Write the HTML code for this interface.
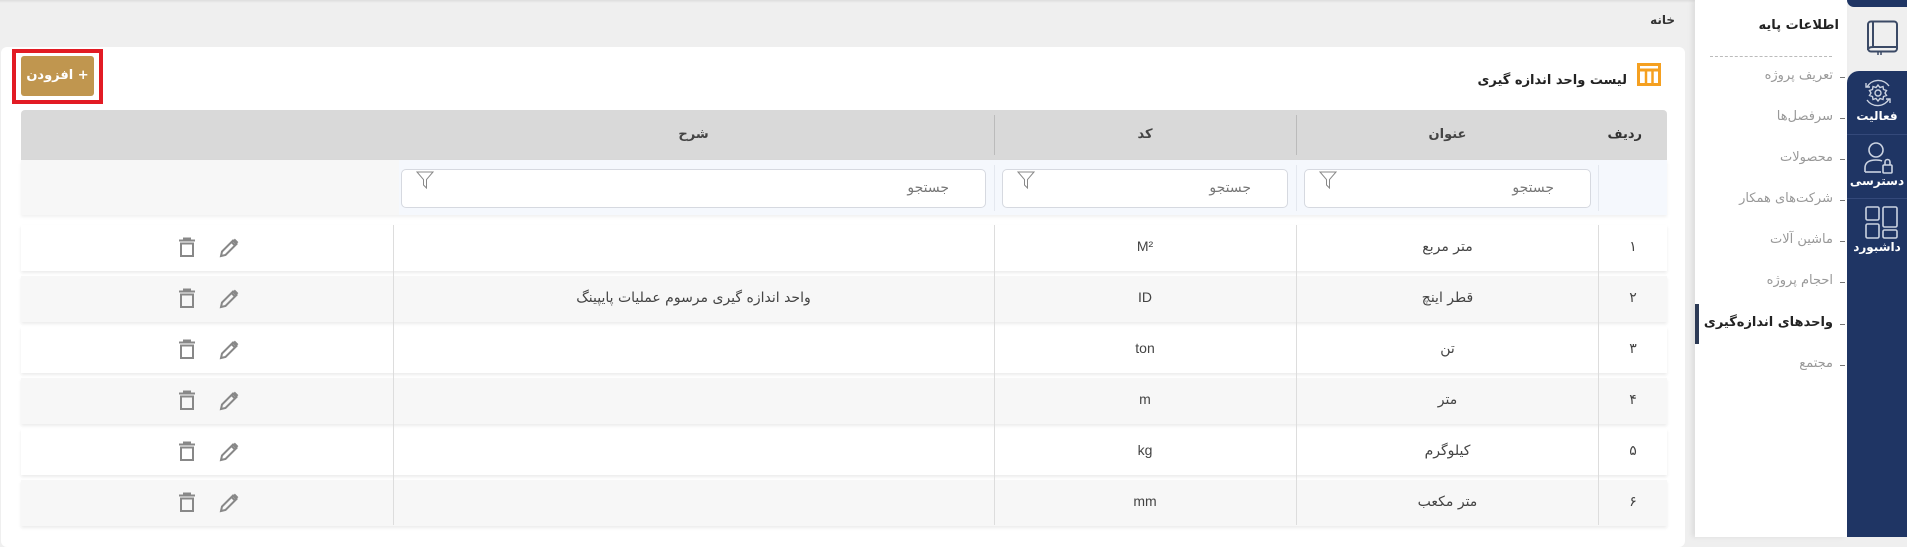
<!DOCTYPE html>
<html><head><meta charset="utf-8"><style>
*{margin:0;padding:0;box-sizing:border-box}
body{width:1907px;height:537px;overflow:hidden;background:#efefef;font-family:"DejaVu Sans","Liberation Sans",sans-serif;color:#333;position:relative}
.a{position:absolute}
.t{position:absolute;white-space:nowrap;direction:rtl}
.card{left:1px;top:47px;width:1684px;height:500px;background:#fff;border-radius:6px}
.hd{left:21px;top:110px;width:1646px;height:50px;background:#d9d9d9;border-radius:4px 4px 0 0}
.fr{left:21px;top:160px;width:1646px;height:55px;background:#f5f8fd;box-shadow:0 2px 3px rgba(0,0,0,.06)}
.row{left:21px;width:1646px;height:46px;box-shadow:0 2px 3px rgba(0,0,0,.08)}
.vl{position:absolute;width:1px;background:#ddd}
.inp{position:absolute;top:169px;height:39px;background:#fff;border:1px solid #d6d9e0;border-radius:5px}
.ph{position:absolute;right:36px;top:10px;font-size:14px;color:#777;direction:rtl}
.c{position:absolute;font-size:14px;color:#444;text-align:center;direction:rtl;white-space:nowrap}
.mi{position:absolute;right:74px;font-size:13px;color:#999;direction:rtl;white-space:nowrap}
.dash{position:absolute;left:1840px;width:5px;height:1px;background:#777}
.nl{position:absolute;left:1847px;width:60px;text-align:center;color:#fff;font-size:12px;font-weight:bold;direction:rtl}
</style></head><body>
<div class="a" style="left:0;top:0;width:1695px;height:3px;background:linear-gradient(#ddd,#efefef)"></div>
<div class="t" style="right:232px;top:13px;font-size:12px;font-weight:bold;color:#333">خانه</div>
<div class="a card"></div>
<div class="a" style="left:12px;top:49px;width:91px;height:55px;border:4px solid #e21b24"></div>
<div class="a" style="left:21px;top:56px;width:73px;height:40px;background:#c0964f;border-radius:3px;color:#fff;font-size:13px;font-weight:bold;text-align:center;line-height:40px;direction:rtl">+ افزودن</div>
<svg class="a" style="left:1637px;top:63px" width="24" height="23" viewBox="0 0 24 23"><rect x="1.5" y="1.5" width="21" height="20" fill="none" stroke="#f5a020" stroke-width="3"/><line x1="1" y1="7" x2="23" y2="7" stroke="#f5a020" stroke-width="3"/><line x1="9" y1="7" x2="9" y2="22" stroke="#f5a020" stroke-width="2.5"/><line x1="15.5" y1="7" x2="15.5" y2="22" stroke="#f5a020" stroke-width="2.5"/></svg>
<div class="t" style="right:280px;top:73px;font-size:13px;font-weight:bold;color:#222">لیست واحد اندازه گیری</div>
<div class="a hd"></div>
<div class="vl" style="left:994px;top:115px;height:40px;background:#bbb"></div>
<div class="vl" style="left:1296px;top:115px;height:40px;background:#bbb"></div>
<div class="t" style="right:265px;top:127px;font-size:13px;font-weight:bold">ردیف</div>
<div class="c" style="left:1296px;width:303px;top:127px;font-size:13px;font-weight:bold">عنوان</div>
<div class="c" style="left:994px;width:302px;top:127px;font-size:13px;font-weight:bold">کد</div>
<div class="c" style="left:393px;width:601px;top:127px;font-size:13px;font-weight:bold">شرح</div>
<div class="a fr"></div>
<div class="vl" style="left:994px;top:165px;height:46px;background:#e4e8ef"></div>
<div class="vl" style="left:1296px;top:165px;height:46px;background:#e4e8ef"></div>
<div class="vl" style="left:1598px;top:165px;height:46px;background:#e4e8ef"></div>
<div class="a" style="left:21px;top:160px;width:378px;height:55px;background:#f7f7f7"></div>
<div class="inp" style="left:1304px;width:287px"><span class="ph">جستجو</span><svg class="a" style="left:14px;top:1px" width="18" height="18" viewBox="0 0 18 18"><path d="M1 1H17L10.5 8.5V17L7.5 14V8.5Z" fill="none" stroke="#888" stroke-width="1"/></svg></div>
<div class="inp" style="left:1002px;width:286px"><span class="ph">جستجو</span><svg class="a" style="left:14px;top:1px" width="18" height="18" viewBox="0 0 18 18"><path d="M1 1H17L10.5 8.5V17L7.5 14V8.5Z" fill="none" stroke="#888" stroke-width="1"/></svg></div>
<div class="inp" style="left:401px;width:585px"><span class="ph">جستجو</span><svg class="a" style="left:14px;top:1px" width="18" height="18" viewBox="0 0 18 18"><path d="M1 1H17L10.5 8.5V17L7.5 14V8.5Z" fill="none" stroke="#888" stroke-width="1"/></svg></div>

<div class="a row" style="top:225px;background:#fff"></div>
<div class="a row" style="top:276px;background:#f7f7f7"></div>
<div class="a row" style="top:327px;background:#fff"></div>
<div class="a row" style="top:378px;background:#f7f7f7"></div>
<div class="a row" style="top:429px;background:#fff"></div>
<div class="a row" style="top:480px;background:#f7f7f7"></div>
<div class="vl" style="left:393px;top:225px;height:300px"></div>
<div class="vl" style="left:994px;top:225px;height:300px"></div>
<div class="vl" style="left:1296px;top:225px;height:300px"></div>
<div class="vl" style="left:1598px;top:225px;height:300px"></div>

<div class="c" style="left:1599px;width:68px;top:239px">۱</div>
<div class="c" style="left:1296px;width:303px;top:239px">متر مربع</div>
<div class="c" style="left:994px;width:302px;top:238px;font-family:'Liberation Sans',sans-serif">M²</div>

<div class="c" style="left:1599px;width:68px;top:290px">۲</div>
<div class="c" style="left:1296px;width:303px;top:290px">قطر اینچ</div>
<div class="c" style="left:994px;width:302px;top:289px;font-family:'Liberation Sans',sans-serif">ID</div>
<div class="c" style="left:393px;width:601px;top:290px">واحد اندازه گیری مرسوم عملیات پایپینگ</div>

<div class="c" style="left:1599px;width:68px;top:341px">۳</div>
<div class="c" style="left:1296px;width:303px;top:341px">تن</div>
<div class="c" style="left:994px;width:302px;top:340px;font-family:'Liberation Sans',sans-serif">ton</div>

<div class="c" style="left:1599px;width:68px;top:392px">۴</div>
<div class="c" style="left:1296px;width:303px;top:392px">متر</div>
<div class="c" style="left:994px;width:302px;top:391px;font-family:'Liberation Sans',sans-serif">m</div>

<div class="c" style="left:1599px;width:68px;top:443px">۵</div>
<div class="c" style="left:1296px;width:303px;top:443px">کیلوگرم</div>
<div class="c" style="left:994px;width:302px;top:442px;font-family:'Liberation Sans',sans-serif">kg</div>

<div class="c" style="left:1599px;width:68px;top:494px">۶</div>
<div class="c" style="left:1296px;width:303px;top:494px">متر مکعب</div>
<div class="c" style="left:994px;width:302px;top:493px;font-family:'Liberation Sans',sans-serif">mm</div>

<svg width="0" height="0" style="position:absolute"><defs>
<g id="tr"><path d="M1 3.5H17M6 3.5V1.5H12V3.5M3 6.5H15V19H3Z" fill="none" stroke="#888" stroke-width="2"/></g>
<g id="pn"><path d="M2 18L3 13.5L14 2.5L17.5 6L6.5 17Z" fill="none" stroke="#888" stroke-width="2"/><path d="M12.5 4L16 7.5" stroke="#888" stroke-width="2"/><path d="M15 1.5L18.5 5" stroke="#888" stroke-width="2.5"/></g>
</defs></svg>
<svg class="a" style="left:178px;top:237px" width="20" height="20"><use href="#tr"/></svg>
<svg class="a" style="left:219px;top:238px" width="20" height="20"><use href="#pn"/></svg>
<svg class="a" style="left:178px;top:288px" width="20" height="20"><use href="#tr"/></svg>
<svg class="a" style="left:219px;top:289px" width="20" height="20"><use href="#pn"/></svg>
<svg class="a" style="left:178px;top:339px" width="20" height="20"><use href="#tr"/></svg>
<svg class="a" style="left:219px;top:340px" width="20" height="20"><use href="#pn"/></svg>
<svg class="a" style="left:178px;top:390px" width="20" height="20"><use href="#tr"/></svg>
<svg class="a" style="left:219px;top:391px" width="20" height="20"><use href="#pn"/></svg>
<svg class="a" style="left:178px;top:441px" width="20" height="20"><use href="#tr"/></svg>
<svg class="a" style="left:219px;top:442px" width="20" height="20"><use href="#pn"/></svg>
<svg class="a" style="left:178px;top:492px" width="20" height="20"><use href="#tr"/></svg>
<svg class="a" style="left:219px;top:493px" width="20" height="20"><use href="#pn"/></svg>

<div class="a" style="left:1695px;top:0;width:152px;height:537px;background:#fff;box-shadow:-3px 0 5px rgba(0,0,0,.08)"></div>
<div class="t" style="right:68px;top:18px;font-size:13px;font-weight:bold;color:#222">اطلاعات پایه</div>
<div class="a" style="left:1710px;top:56px;width:122px;border-top:1px dashed #bbb"></div>
<div class="mi" style="top:68px">تعریف پروژه</div><div class="dash" style="top:77px"></div>
<div class="mi" style="top:109px">سرفصل‌ها</div><div class="dash" style="top:118px"></div>
<div class="mi" style="top:150px">محصولات</div><div class="dash" style="top:159px"></div>
<div class="mi" style="top:191px">شرکت‌های همکار</div><div class="dash" style="top:200px"></div>
<div class="mi" style="top:232px">ماشین آلات</div><div class="dash" style="top:241px"></div>
<div class="mi" style="top:273px">احجام پروژه</div><div class="dash" style="top:282px"></div>
<div class="mi" style="top:315px;color:#222;font-weight:bold">واحدهای اندازه‌گیری</div><div class="dash" style="top:324px"></div>
<div class="mi" style="top:356px">مجتمع</div><div class="dash" style="top:365px"></div>
<div class="a" style="left:1695px;top:304px;width:4px;height:40px;background:#2c3a55"></div>
<div class="a" style="left:1847px;top:0;width:60px;height:7px;background:#1f3564;border-radius:0 0 0 8px"></div>
<div class="a" style="left:1847px;top:71px;width:60px;height:466px;background:#1f3564;border-radius:12px 0 0 0"></div>
<svg class="a" style="left:1866px;top:20px" width="34" height="36" viewBox="0 0 34 36"><rect x="2" y="1.5" width="29" height="30" rx="3" fill="none" stroke="#3b4a66" stroke-width="2"/><path d="M7 1.5V27M7 27H31M2 30Q2 27 7 27" fill="none" stroke="#3b4a66" stroke-width="2"/><path d="M12 31V35M15 31V35" stroke="#3b4a66" stroke-width="1.5"/></svg>
<svg class="a" style="left:1862px;top:77px" width="32" height="32" viewBox="0 0 32 32" fill="none" stroke="#cbd3e1" stroke-width="1.4"><path d="M5 10A13 13 0 0 1 27 9M27 22A13 13 0 0 1 5 23"/><path d="M4 6V10H8M28 26V22H24"/><circle cx="16" cy="16" r="3"/><path d="M16 8l2 2.5 3-1 .5 3 3 1-1.5 2.5 1.5 2.5-3 1-.5 3-3-1-2 2.5-2-2.5-3 1-.5-3-3-1 1.5-2.5-1.5-2.5 3-1 .5-3 3 1z"/></svg>
<div class="nl" style="top:109px">فعالیت</div>
<div class="a" style="left:1847px;top:134px;width:60px;height:1px;background:#34497a"></div>
<svg class="a" style="left:1863px;top:141px" width="32" height="33" viewBox="0 0 32 33" fill="none" stroke="#cbd3e1" stroke-width="1.6"><circle cx="13" cy="9" r="7"/><path d="M2 31V27Q2 19 13 19Q17 19 19 20"/><path d="M2 31H18"/><rect x="20" y="24" width="9" height="8" rx="1"/><path d="M22 24V21A2.5 2.5 0 0 1 27 21V24"/></svg>
<div class="nl" style="top:174px">دسترسی</div>
<div class="a" style="left:1847px;top:198px;width:60px;height:1px;background:#34497a"></div>
<svg class="a" style="left:1865px;top:206px" width="33" height="33" viewBox="0 0 33 33" fill="none" stroke="#cbd3e1" stroke-width="1.6"><rect x="1" y="1" width="13" height="13" rx="1.5"/><rect x="18" y="1" width="14" height="20" rx="1.5"/><rect x="1" y="18" width="13" height="14" rx="1.5"/><rect x="18" y="24" width="14" height="8" rx="1.5"/></svg>
<div class="nl" style="top:240px">داشبورد</div>
</body></html>
